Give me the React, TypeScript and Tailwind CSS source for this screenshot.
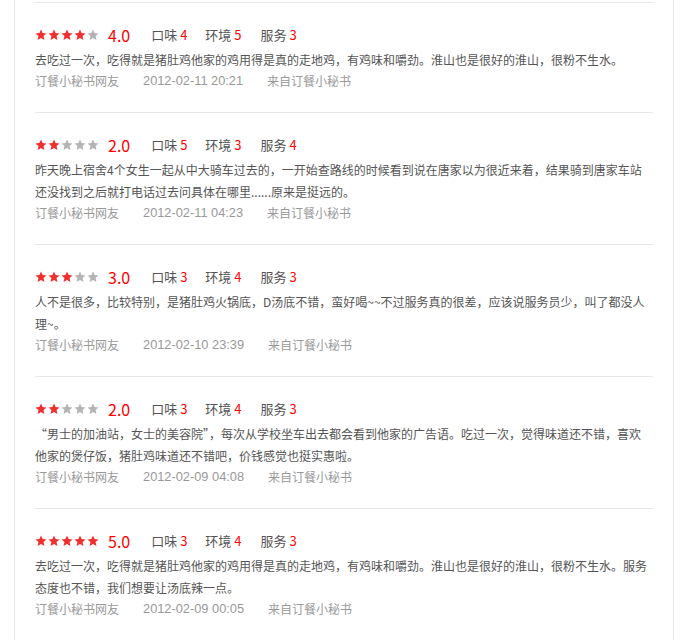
import React from "react";

type Review = {
  score: number;
  taste: number;
  env: number;
  service: number;
  lines: string[];
  date: string;
};

const reviews: Review[] = [
  {
    score: 4,
    taste: 4,
    env: 5,
    service: 3,
    lines: ["去吃过一次，吃得就是猪肚鸡他家的鸡用得是真的走地鸡，有鸡味和嚼劲。淮山也是很好的淮山，很粉不生水。"],
    date: "2012-02-11 20:21",
  },
  {
    score: 2,
    taste: 5,
    env: 3,
    service: 4,
    lines: [
      "昨天晚上宿舍4个女生一起从中大骑车过去的，一开始查路线的时候看到说在唐家以为很近来着，结果骑到唐家车站",
      "还没找到之后就打电话过去问具体在哪里......原来是挺远的。",
    ],
    date: "2012-02-11 04:23",
  },
  {
    score: 3,
    taste: 3,
    env: 4,
    service: 3,
    lines: [
      "人不是很多，比较特别，是猪肚鸡火锅底，D汤底不错，蛮好喝~~不过服务真的很差，应该说服务员少，叫了都没人",
      "理~。",
    ],
    date: "2012-02-10 23:39",
  },
  {
    score: 2,
    taste: 3,
    env: 4,
    service: 3,
    lines: [
      "“男士的加油站，女士的美容院”，每次从学校坐车出去都会看到他家的广告语。吃过一次，觉得味道还不错，喜欢",
      "他家的煲仔饭，猪肚鸡味道还不错吧，价钱感觉也挺实惠啦。",
    ],
    date: "2012-02-09 04:08",
  },
  {
    score: 5,
    taste: 3,
    env: 4,
    service: 3,
    lines: [
      "去吃过一次，吃得就是猪肚鸡他家的鸡用得是真的走地鸡，有鸡味和嚼劲。淮山也是很好的淮山，很粉不生水。服务",
      "态度也不错，我们想要让汤底辣一点。",
    ],
    date: "2012-02-09 00:05",
  },
];

const CJK = { fontFamily: '"Noto Sans CJK SC", "Noto Sans", sans-serif' };
const LAT = { fontFamily: '"Liberation Sans", Arial, sans-serif' };

function Star({ on }: { on: boolean }) {
  return (
    <svg width="12" height="12" viewBox="0 0 24 24" className="block shrink-0">
      <polygon
        points="12,1 15.2,8.2 23,8.9 17.1,14.1 18.9,22 12,17.9 5.1,22 6.9,14.1 1,8.9 8.8,8.2"
        fill={on ? "#f02f2f" : "#b4b4b4"}
      />
    </svg>
  );
}

function Item({ r }: { r: Review }) {
  return (
    <div className="border-t border-[#e6e6e6] pt-[20px] pb-[21px]">
      <div className="flex h-[24px] items-center">
        <div className="flex gap-[1px]">
          {[1, 2, 3, 4, 5].map((i) => (
            <Star key={i} on={i <= r.score} />
          ))}
        </div>
        <span className="ml-[9px] text-[16px] leading-[24px] text-[#ff0000]" style={CJK}>
          {r.score.toFixed(1)}
        </span>
        <span className="ml-[21px] text-[13px] leading-[24px] text-[#555]" style={CJK}>
          口味 <span className="text-[#ff0000]">{r.taste}</span>
        </span>
        <span className="ml-[18px] text-[13px] leading-[24px] text-[#555]" style={CJK}>
          环境 <span className="text-[#ff0000]">{r.env}</span>
        </span>
        <span className="ml-[19px] text-[13px] leading-[24px] text-[#555]" style={CJK}>
          服务 <span className="text-[#ff0000]">{r.service}</span>
        </span>
      </div>
      <p className="mt-[2px] pr-[1px] text-[12px] leading-[22px] text-[#555]" style={CJK}>
        {r.lines.map((l, i) => (
          <React.Fragment key={i}>
            {i > 0 && <br />}
            {l}
          </React.Fragment>
        ))}
      </p>
      <div className="flex h-[20px] items-center text-[12px] leading-[20px] text-[#999]">
        <span style={CJK}>订餐小秘书网友</span>
        <span className="ml-[24px] text-[12.8px]" style={LAT}>
          {r.date}
        </span>
        <span className="ml-[24px]" style={CJK}>
          来自订餐小秘书
        </span>
      </div>
    </div>
  );
}

export default function App() {
  return (
    <div className="h-[640px] w-[689px] overflow-hidden bg-white" lang="zh-CN">
      <div className="ml-[14px] h-full w-[660px] border-x border-[#e8e8e8] px-[20px] pt-[2px]">
        {reviews.map((r, i) => (
          <Item key={i} r={r} />
        ))}
      </div>
    </div>
  );
}
